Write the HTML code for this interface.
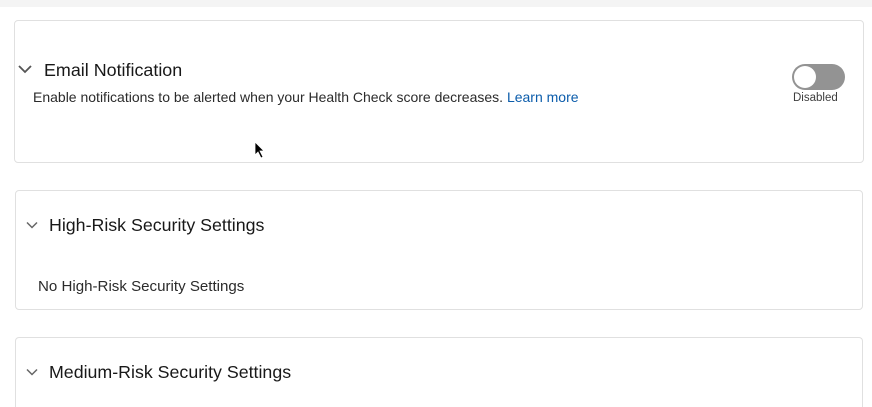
<!DOCTYPE html>
<html><head><style>
html,body{margin:0;width:872px;height:407px;overflow:hidden}
body{background:#fff;font-family:"Liberation Sans",sans-serif;color:#181818;position:relative}
.top{position:absolute;left:0;top:0;width:872px;height:7px;background:#f4f4f4}
.card{position:absolute;border:1px solid #e0e0e0;border-radius:4px;background:#fff;box-sizing:border-box}
.chev{position:absolute}
.t{position:absolute;white-space:nowrap}
</style></head><body>
<div class="top"></div>
<div class="card" style="left:14px;top:20px;width:850px;height:143px"></div>
<svg class="chev" style="left:17px;top:63px" width="16" height="12"><path d="M2 3 L8 9 L14 3" fill="none" stroke="#555" stroke-width="1.8"/></svg>
<div class="t" style="left:44px;top:60px;font-size:17.9px">Email Notification</div>
<div class="t" style="left:33px;top:89px;font-size:14px;color:#2b2b2b">Enable notifications to be alerted when your Health Check score decreases. <span style="color:#0b5cab">Learn more</span></div>
<div style="position:absolute;left:792px;top:64px;width:53px;height:26px;border-radius:13px;background:#939393"></div>
<div style="position:absolute;left:794px;top:66px;width:22px;height:22px;border-radius:50%;background:#fff"></div>
<div class="t" style="left:793px;top:92px;font-size:11.5px;color:#3e3e3e">Disabled</div>
<div class="card" style="left:15px;top:190px;width:848px;height:120px"></div>
<svg class="chev" style="left:25px;top:220px" width="14" height="10"><path d="M2 2.5 L7 7.5 L12 2.5" fill="none" stroke="#666" stroke-width="1.5"/></svg>
<div class="t" style="left:49px;top:215px;font-size:17.8px">High-Risk Security Settings</div>
<div class="t" style="left:38px;top:278px;font-size:15.1px;color:#2b2b2b">No High-Risk Security Settings</div>
<div class="card" style="left:15px;top:337px;width:848px;height:70px;border-bottom:none;border-radius:4px 4px 0 0"></div>
<svg class="chev" style="left:25px;top:367px" width="14" height="10"><path d="M2 2.5 L7 7.5 L12 2.5" fill="none" stroke="#666" stroke-width="1.5"/></svg>
<div class="t" style="left:49px;top:362px;font-size:17.8px">Medium-Risk Security Settings</div>
<svg style="position:absolute;left:254px;top:141px" width="12" height="18"><path d="M1 1 L1 14 L4 11 L7 17 L9 16 L6 10 L10 10 Z" fill="#000" stroke="#fff" stroke-width="0.8"/></svg>
</body></html>
